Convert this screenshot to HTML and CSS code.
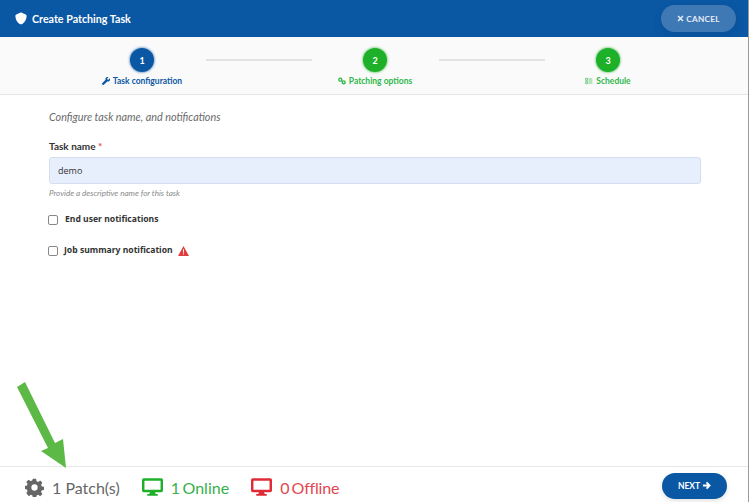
FILE: index.html
```html
<!DOCTYPE html>
<html lang="en">
<head>
    <meta charset="UTF-8" />
    <title>Create Patching Task</title>
    <link rel="stylesheet" href="styles.css">
</head>
<body>
    <div class="dialog">
        <header class="topbar">
            <h1>
                <svg class="shield" viewBox="0 0 512 512"><path d="M256 0c5 0 9 1 13 3l188 80c22 9 38 31 38 56-1 99-42 281-214 363-16 8-35 8-51 0C58 420 17 238 17 139c0-25 16-47 38-56L243 3c4-2 8-3 13-3z"/></svg>
                Create Patching Task
            </h1>
            <button class="cancel">
                <svg viewBox="0 0 10 10"><path d="M1.500 1.500l7 7M8.500 1.500l-7 7" stroke="currentColor" stroke-width="2.200" fill="none"/></svg>
                CANCEL
            </button>
        </header>

        <section class="stepper">
            <div class="step active">
                <span class="num">1</span>
                <span class="step-label">
                    <svg viewBox="0 0 512 512"><path d="M507 109c-3-11-17-15-25-7l-74 74-68-11-11-68 74-74c8-8 4-22-7-25-47-12-99 1-136 38-39 39-49 97-31 145L15 395c-20 20-20 52 0 72l30 30c20 20 52 20 72 0l214-214c48 18 106 8 145-31 37-37 50-89 31-143z"/></svg>
                    Task configuration
                </span>
            </div>
            <div class="line"></div>
            <div class="step">
                <span class="num">2</span>
                <span class="step-label">
                    <svg viewBox="0 0 24 24"><circle cx="7" cy="8" r="4.500" fill="none" stroke="currentColor" stroke-width="4"/><circle cx="17" cy="16" r="4.500" fill="none" stroke="currentColor" stroke-width="4"/></svg>
                    Patching options
                </span>
            </div>
            <div class="line"></div>
            <div class="step">
                <span class="num">3</span>
                <span class="step-label">
                    <svg viewBox="0 0 24 24"><path d="M2 4h6v6H2zM2 14h6v6H2zM11 6h11M11 12h11M11 18h11" fill="none" stroke="currentColor" stroke-width="2"/></svg>
                    Schedule
                </span>
            </div>
        </section>

        <main class="content">
            <p class="intro">Configure task name, and notifications</p>
            <label class="field-label" for="task-name">Task name <span class="req">*</span></label>
            <input class="field" id="task-name" type="text" value="demo" />
            <p class="hint">Provide a descriptive name for this task</p>
            <label class="check check-first"><input type="checkbox" /> <span class="check-text">End user notifications</span></label>
            <label class="check"><input type="checkbox" /> <span class="check-text narrow">Job summary notification</span>
                <svg class="warn" viewBox="0 0 24 22"><path fill="#e03c3c" d="M12 0l12 22H0z"/><path fill="#fff" d="M10.800 7h2.400l-.3 8h-1.800zM10.800 16.500h2.400v2.400h-2.400z"/></svg>
            </label>
        </main>

        <footer class="bottombar">
            <div class="stats">
                <span class="stat grey">
                    <svg viewBox="0 0 24 24"><path fill="currentColor" fill-rule="evenodd" d="M10 1h4l.6 3 2 .9 2.600-1.700 2.800 2.800-1.700 2.600.9 2 2.800.4v4l-2.800.6-.9 2 1.700 2.600-2.800 2.800-2.600-1.700-2 .9-.6 2.800h-4l-.6-2.800-2-.9-2.600 1.700L1.600 19l1.700-2.600-.9-2L0 14v-4l2.400-.4.9-2L1.600 5l2.800-2.800L7 3.900l2-.9zM12 8a4 4 0 1 0 0 8 4 4 0 0 0 0-8z"/></svg>
                    1 Patch(s)
                </span>
                <span class="stat green">
                    <svg viewBox="0 0 24 20"><path fill="currentColor" fill-rule="evenodd" d="M2 0h20a2 2 0 0 1 2 2v12a2 2 0 0 1-2 2h-7l.6 2h2.400v2H6v-2h2.400l.6-2H2a2 2 0 0 1-2-2V2a2 2 0 0 1 2-2zm.8 2.800v10.400h18.400V2.800z"/></svg>
                    1 Online
                </span>
                <span class="stat red">
                    <svg viewBox="0 0 24 20"><path fill="currentColor" fill-rule="evenodd" d="M2 0h20a2 2 0 0 1 2 2v12a2 2 0 0 1-2 2h-7l.6 2h2.400v2H6v-2h2.400l.6-2H2a2 2 0 0 1-2-2V2a2 2 0 0 1 2-2zm.8 2.800v10.400h18.400V2.800z"/></svg>
                    0 Offline
                </span>
            </div>
            <button class="next">
                NEXT
                <svg viewBox="0 0 10 10"><path d="M1 5h7M5 1.500L8.500 5 5 8.500" stroke="currentColor" stroke-width="2" fill="none"/></svg>
            </button>
        </footer>

        <!-- annotation drawn over the screenshot -->
        <svg class="arrow" viewBox="16 380 52 90"><path fill="#5cb946" d="M17 387 25 382 55 443 63 439 66 468 41 451 48 448z"/></svg>
    </div>
</body>
</html>
```

FILE: styles.css
```css
html, body {
    margin: 0;
    padding: 0;
    height: 100%;
}

body {
    font-family: 'Lato', sans-serif;
    background: #fff;
    color: #333;
    overflow: hidden;
}

.dialog {
    position: relative;
    display: flex;
    flex-direction: column;
    width: 748px;
    height: 502px;
    border-right: 1px solid #9a9a9a;
}

.topbar {
    display: flex;
    justify-content: space-between;
    align-items: flex-start;
    height: 37px;
    padding: 5px 12px 0 15px;
    box-sizing: border-box;
    background: #0a57a3;
    color: #fff;
}

h1 {
    display: flex;
    align-items: center;
    gap: 5px;
    margin: 7px 0 0;
    font-size: 10.700px;
    font-weight: 700;
}

.shield {
    width: 12px;
    height: 13px;
    fill: #fff;
}

.cancel {
    display: flex;
    align-items: center;
    justify-content: center;
    gap: 2px;
    width: 75px;
    height: 27px;
    padding: 0;
    border: none;
    border-radius: 14px;
    background: #3e78b5;
    color: #e4ecf5;
    font-family: inherit;
    font-size: 8.200px;
    font-weight: 700;
    letter-spacing: 0.3px;
    box-shadow: 0 4px 8px rgba(10, 60, 120, 0.2);
}

.cancel svg {
    width: 7px;
    height: 7px;
}

.stepper {
    display: flex;
    justify-content: center;
    height: 58px;
    padding-left: 2px;
    box-sizing: border-box;
    background: #fafafa;
    border-bottom: 1px solid #e6e6e6;
}

.step {
    display: flex;
    flex-direction: column;
    align-items: center;
    width: 127px;
    padding-top: 11px;
    color: #2fb84a;
}

.step.active {
    color: #0a57a3;
}

.num {
    display: flex;
    align-items: center;
    justify-content: center;
    width: 24px;
    height: 24px;
    border-radius: 50%;
    background: #1fb02a;
    color: #fff;
    font-size: 9px;
    font-weight: 700;
    box-shadow: 0 0 2px 1px rgba(31, 176, 42, 0.45);
}

.step.active .num {
    background: #0a57a3;
    box-shadow: 0 0 2px 1px rgba(10, 87, 163, 0.45);
}

.step-label {
    display: flex;
    align-items: center;
    gap: 3px;
    margin-top: 4px;
    font-size: 8.500px;
    font-weight: 700;
    white-space: nowrap;
}

.step-label svg {
    width: 8px;
    height: 8px;
    fill: currentColor;
}

.line {
    width: 106px;
    height: 2px;
    margin-top: 22px;
    background: #e2e2e2;
}

.content {
    flex: 1;
    padding: 0 47px 0 49px;
}

.intro {
    margin: 15px 0 0;
    font-size: 10.800px;
    font-style: italic;
    color: #6a6a6a;
    line-height: 14px;
}

.field-label {
    display: block;
    margin-top: 15px;
    font-size: 10px;
    font-weight: 700;
    line-height: 14px;
}

.req {
    color: #d9534f;
}

.field {
    display: block;
    width: 100%;
    height: 27px;
    margin-top: 4px;
    padding: 0 8px;
    box-sizing: border-box;
    border: 1px solid #d5def0;
    border-radius: 3px;
    background: #e8effc;
    color: #333;
    font-family: 'Open Sans', sans-serif;
    font-size: 9px;
}

.hint {
    margin: 4px 0 0;
    font-size: 8.100px;
    font-style: italic;
    color: #8a8a8a;
    line-height: 10px;
}

.check {
    display: flex;
    align-items: center;
    height: 14px;
    margin-top: 17px;
    font-family: 'Noto Sans', sans-serif;
    font-size: 8.600px;
    font-weight: 700;
}

.check-first {
    margin-top: 15px;
}

.check input {
    width: 10px;
    height: 10px;
    margin: 0 6px 0 -1px;
    appearance: none;
    border: 1px solid #888;
    border-radius: 2px;
    background: #fff;
}

.check-text {
    margin-left: 1px;
    margin-top: -2px;
}

.check-text.narrow {
    margin-left: 0;
}

.warn {
    width: 11px;
    height: 10px;
    margin-left: 5px;
    margin-top: -1px;
}

.bottombar {
    display: flex;
    justify-content: space-between;
    align-items: center;
    height: 36px;
    padding: 0 21px 0 25px;
    box-sizing: border-box;
    border-top: 1px solid #e8e8e8;
}

.stats {
    display: flex;
    gap: 22px;
    padding-top: 5px;
}

.stat {
    display: flex;
    align-items: center;
    gap: 8px;
    font-size: 16px;
    white-space: nowrap;
}

.stat svg {
    width: 21px;
    height: 18px;
}

.grey { color: #666; }
.grey svg { width: 19px; height: 19px; }
.green { color: #36b04a; word-spacing: -1.500px; }
.green svg { color: #1fb02a; }
.red { color: #e2474f; word-spacing: -1.500px; letter-spacing: -0.2px; }
.red svg { color: #e02b36; }

.next {
    display: flex;
    align-items: center;
    justify-content: center;
    gap: 2px;
    width: 65px;
    height: 26px;
    margin-top: 2px;
    padding: 0;
    border: none;
    border-radius: 13px;
    background: #0a57a3;
    color: #fff;
    font-family: inherit;
    font-size: 8.500px;
    font-weight: 700;
    box-shadow: 0 2px 5px rgba(0, 0, 0, 0.12);
}

.next svg {
    width: 9px;
    height: 9px;
}

.arrow {
    position: absolute;
    left: 16px;
    top: 380px;
    width: 52px;
    height: 90px;
}
```
